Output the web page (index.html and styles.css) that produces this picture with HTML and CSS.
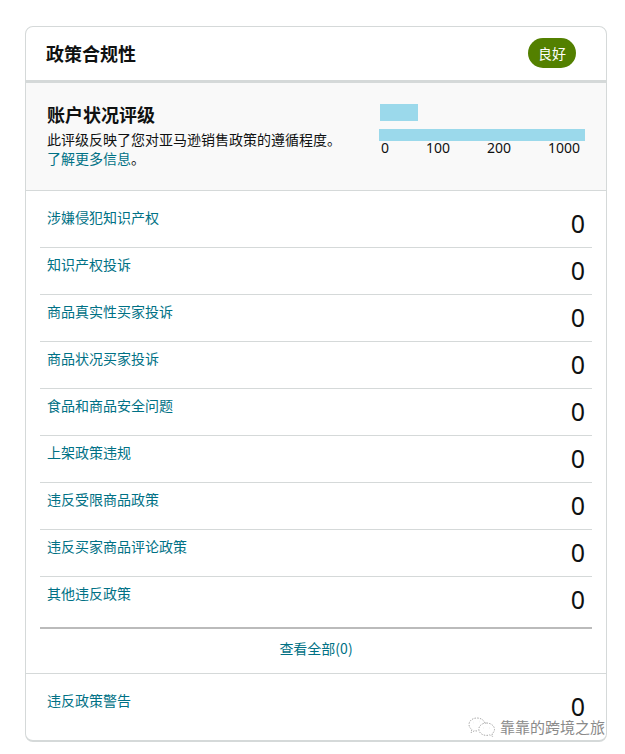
FILE: index.html
```html
<!DOCTYPE html>
<html lang="zh">
<head>
<meta charset="utf-8">
<title>政策合规性</title>
<link rel="stylesheet" href="styles.css">
</head>
<body>
<section class="card">
  <header class="card-head">
    <h2 class="card-title">政策合规性</h2>
    <span class="badge">良好</span>
  </header>
  <div class="rating">
    <div class="rating-text">
      <h3 class="rating-title">账户状况评级</h3>
      <p class="rating-desc">此评级反映了您对亚马逊销售政策的遵循程度。</p>
      <p class="rating-desc"><a class="link" href="#">了解更多信息</a>。</p>
    </div>
    <div class="meter">
      <div class="meter-mark"></div>
      <div class="meter-bar"></div>
      <div class="meter-scale"><span>0</span><span>100</span><span>200</span><span>1000</span></div>
    </div>
  </div>
  <ul class="rows">
    <li class="row first"><a class="link" href="#">涉嫌侵犯知识产权</a><span class="num">0</span></li>
    <li class="row"><a class="link" href="#">知识产权投诉</a><span class="num">0</span></li>
    <li class="row"><a class="link" href="#">商品真实性买家投诉</a><span class="num">0</span></li>
    <li class="row"><a class="link" href="#">商品状况买家投诉</a><span class="num">0</span></li>
    <li class="row"><a class="link" href="#">食品和商品安全问题</a><span class="num">0</span></li>
    <li class="row"><a class="link" href="#">上架政策违规</a><span class="num">0</span></li>
    <li class="row"><a class="link" href="#">违反受限商品政策</a><span class="num">0</span></li>
    <li class="row"><a class="link" href="#">违反买家商品评论政策</a><span class="num">0</span></li>
    <li class="row last"><a class="link" href="#">其他违反政策</a><span class="num">0</span></li>
  </ul>
  <div class="view-all"><a class="link" href="#">查看全部(0)</a></div>
  <div class="warning"><a class="link" href="#">违反政策警告</a><span class="num">0</span></div>
</section>
<div class="watermark">
  <svg class="wm-icon" width="28" height="20" viewBox="0 0 28 20" fill="none" stroke="#aaa" stroke-width="1" stroke-dasharray="1.5 1.2">
    <path d="M9 14c-.8 0-1.600-.1-2.400-.3L3 15.500l.8-3C2 11.200 1 9.500 1 7.500 1 3.900 4.500 1 9 1c3.700 0 6.800 2 7.700 4.800"/>
    <path d="M18.500 6c4.300 0 8 2.800 8 6.300 0 1.800-1 3.400-2.500 4.600l.7 2.500-3-1.500c-1 .3-2 .5-3.200.5-4.300 0-7.700-2.800-7.700-6.100C10.800 8.800 14.200 6 18.500 6z"/>
    <path d="M5.500 5.500h.1M11.500 4.500h.1M15.500 11h.1M21.500 11h.1" stroke-width="1.800" stroke-dasharray="none"/>
  </svg>
  <span class="wm-text">靠靠的跨境之旅</span>
</div>
</body>
</html>
```
FILE: styles.css
```css
* { box-sizing: border-box; }
html, body { margin: 0; padding: 0; }
body {
  width: 625px;
  height: 754px;
  padding: 26px 18px 0 25px;
  background: #fff;
  font-family: "Noto Sans CJK SC", "Liberation Sans", sans-serif;
  color: #111;
  position: relative;
  overflow: hidden;
}
.card {
  width: 582px;
  height: 716px;
  border: 1px solid #d5d9d9;
  border-bottom-width: 2px;
  border-radius: 8px;
  overflow: hidden;
}
.card-head {
  height: 56px;
  border-bottom: 3px solid #d5d9d9;
  padding: 0 30px 2px 20px;
  display: flex;
  align-items: center;
  justify-content: space-between;
}
.card-title { margin: 0; font-size: 18px; line-height: 24px; font-weight: 700; color: #0f1111; }
.badge {
  width: 48px;
  height: 30px;
  border-radius: 15px;
  background: #538000;
  color: #fff;
  font-size: 14px;
  line-height: 30px;
  text-align: center;
}
.rating {
  height: 108px;
  background: #f9f9f9;
  border-bottom: 1px solid #d5d9d9;
  padding: 19px 21px 0 21px;
  display: flex;
  justify-content: space-between;
}
.rating-title { margin: 0 0 4px; font-size: 18px; line-height: 24px; font-weight: 700; color: #0f1111; }
.rating-desc { margin: 0; font-size: 14px; line-height: 19px; color: #0f1111; }
.meter { width: 206px; padding-top: 2px; }
.meter-mark { width: 38px; height: 17px; margin-left: 1px; background: #9bd9eb; }
.meter-bar { height: 12px; margin-top: 8px; background: #9bd9eb; }
.meter-scale {
  display: flex;
  justify-content: space-between;
  padding: 0 5px 0 2px;
  font-family: "Noto Sans", "Liberation Sans", sans-serif;
  font-size: 14px;
  line-height: 14px;
  color: #0f1111;
}
.link { color: #007185; text-decoration: none; }
.rows { list-style: none; margin: 0 14px; padding: 0; }
.row {
  height: 47px;
  border-top: 1px solid #d5d9d9;
  padding: 6px 7px 0 7px;
  display: flex;
  justify-content: space-between;
  font-size: 14px;
  line-height: 20px;
}
.row.first { height: 56px; border-top: 0; padding-top: 16px; }
.row.last { height: 51px; }
.num {
  font-family: "Noto Sans", "Liberation Sans", sans-serif;
  font-size: 25px;
  line-height: 20px;
  margin-top: 6px;
  color: #0f1111;
}
.view-all {
  height: 46px;
  margin: 0 14px;
  border-top: 2px solid #bbb;
  padding-top: 9px;
  text-align: center;
  font-size: 14px;
  line-height: 20px;
}
.warning {
  border-top: 1px solid #d5d9d9;
  padding: 16px 21px 0;
  display: flex;
  justify-content: space-between;
  font-size: 14px;
  line-height: 20px;
}
.watermark {
  position: absolute;
  left: 468px;
  top: 717px;
  display: flex;
  align-items: center;
  gap: 4px;
  color: #8a8a8a;
  font-size: 15px;
  line-height: 18px;
  text-shadow: 0 0 1px #fff;
}
.wm-icon { flex: none; }
.wm-text { white-space: nowrap; }
```
